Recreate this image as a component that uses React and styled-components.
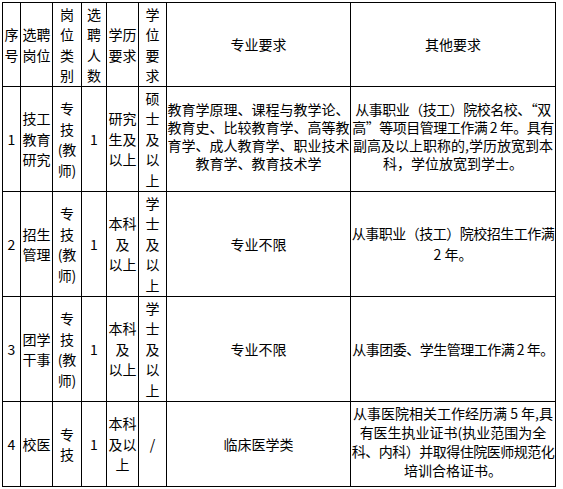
import styled, { createGlobalStyle } from "styled-components"

const GlobalStyle = createGlobalStyle`
    html, body {
        margin: 0;
        background: #fff;
    }
`

const FONT = `"Noto Sans CJK SC", "Noto Sans", sans-serif`

const Sheet = styled.div`
    padding: 2px 0 0 2px;
    font-family: ${FONT};
    font-size: 14px;
    color: #000;
`

const Grid = styled.table`
    width: 554px;
    table-layout: fixed;
    border-collapse: collapse;
    border: 1px solid #000;
`

const Row = styled.tr`
    height: ${(p) => p.$h}px;
`

const Cell = styled.td`
    padding: 0 0 ${(p) => p.$pb || 0}px;
    border: 1px solid #000;
    text-align: center;
    vertical-align: middle;
    white-space: nowrap;
    overflow: hidden;
    font-weight: normal;
    line-height: ${(p) => p.$lh || 20.5}px;
`

const Tight = styled.span`
    letter-spacing: -0.5px;
`

const cols = [18, 32, 29, 25, 32, 28, 184, 205]

const header = [
    ["序", "号"],
    ["选聘", "岗位"],
    ["岗", "位", "类", "别"],
    ["选", "聘", "人", "数"],
    ["学历", "要求"],
    ["学", "位", "要", "求"],
    ["专业要求"],
    ["其他要求"],
]

const teacher = ["专", "技", "(教", "师)"]
const bachelor = ["学", "士", "及", "以", "上"]

const rows = [
    {
        h: 105,
        cells: [
            ["1"],
            ["技工", "教育", "研究"],
            teacher,
            ["1"],
            ["研究", "生及", "以上"],
            ["硕", "士", "及", "以", "上"],
            {
                lh: 18,
                pb: 7,
                lines: ["教育学原理、课程与教学论、", "教育史、比较教育学、高等教", "育学、成人教育学、职业技术", "教育学、教育技术学"],
            },
            {
                lh: 18,
                pb: 7,
                lines: ["~从事职业（技工）院校名校、“双", "~高”等项目管理工作满 2 年。具有", "副高及以上职称的,学历放宽到本", "科，学位放宽到学士。"],
            },
        ],
    },
    {
        h: 105,
        cells: [
            ["2"],
            ["招生", "管理"],
            teacher,
            ["1"],
            ["本科", "及", "以上"],
            bachelor,
            ["专业不限"],
            { lh: 21, lines: ["~从事职业（技工）院校招生工作满", "2 年。"] },
        ],
    },
    {
        h: 105,
        cells: [
            ["3"],
            ["团学", "干事"],
            teacher,
            ["1"],
            ["本科", "及", "以上"],
            bachelor,
            ["专业不限"],
            ["~从事团委、学生管理工作满 2 年。"],
        ],
    },
    {
        h: 85,
        cells: [
            ["4"],
            ["校医"],
            ["专", "技"],
            ["1"],
            ["本科", "及以", "上"],
            ["/"],
            ["临床医学类"],
            {
                lh: 19,
                pb: 4,
                lines: ["从事医院相关工作经历满 5 年,具", "有医生执业证书(执业范围为全", "~科、内科）并取得住院医师规范化", "培训合格证书。"],
            },
        ],
    },
]

// a leading "~" marks a line that is a little too wide and gets squeezed
function Lines({ lines }) {
    return lines.map((line, i) => (
        <span key={i}>
            {i > 0 && <br />}
            {line.startsWith("~") ? <Tight>{line.slice(1)}</Tight> : line}
        </span>
    ))
}

export default function App() {
    return (
        <Sheet>
            <GlobalStyle />
            <Grid>
                <colgroup>
                    {cols.map((w, i) => (
                        <col key={i} style={{ width: w }} />
                    ))}
                </colgroup>
                <thead>
                    <Row $h={84}>
                        {header.map((lines, i) => (
                            <Cell as="th" key={i}>
                                <Lines lines={lines} />
                            </Cell>
                        ))}
                    </Row>
                </thead>
                <tbody>
                    {rows.map((row, r) => (
                        <Row key={r} $h={row.h}>
                            {row.cells.map((c, i) => {
                                const lines = Array.isArray(c) ? c : c.lines
                                return (
                                    <Cell key={i} $lh={c.lh} $pb={c.pb}>
                                        <Lines lines={lines} />
                                    </Cell>
                                )
                            })}
                        </Row>
                    ))}
                </tbody>
            </Grid>
        </Sheet>
    )
}
